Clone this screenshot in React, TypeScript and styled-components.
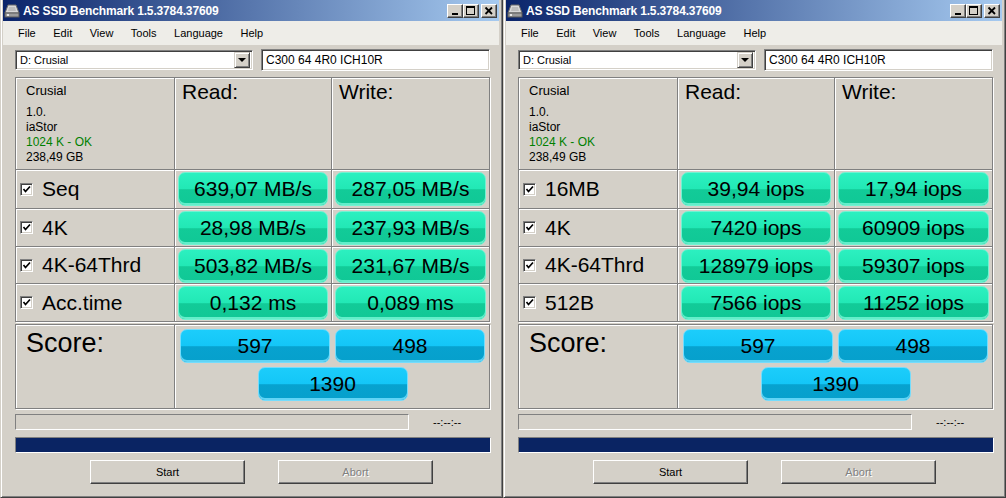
import React from "react";
import styled, { createGlobalStyle } from "styled-components";

type Row = { label: string; read: string; write: string };

interface IBench {
  rows: Row[];
}

const GlobalStyle = createGlobalStyle`
  html, body {
    margin: 0;
    padding: 0;
    background: #d4d0c8;
  }
  body {
    font-family: "Liberation Sans", Arial, sans-serif;
  }
  * {
    box-sizing: border-box;
  }
`;

const Desktop = styled.div`
  display: flex;
  width: 1006px;
  height: 498px;
  overflow: hidden;
`;

const Frame = styled.div`
  width: 503px;
  height: 498px;
  display: flex;
  flex-direction: column;
  background: #d4d0c8;
  border-style: solid;
  border-width: 0 1px 1px 1px;
  border-color: #d4d0c8 #404040 #404040 #d4d0c8;
  box-shadow: inset 1px 0 0 #fff, inset -1px -1px 0 #808080;
  padding: 0 3px 2px 2px;
`;

const TitleBar = styled.div`
  height: 21px;
  display: flex;
  align-items: center;
  padding: 0 2px 0 1px;
  background: linear-gradient(to right, #0a246a, #a6caf0);
`;

const TitleText = styled.span`
  margin-left: 3px;
  flex: 1;
  color: #fff;
  font-weight: bold;
  font-size: 12px;
  letter-spacing: -0.15px;
  white-space: nowrap;
`;

const CaptionButton = styled.div<{ $gap?: number }>`
  width: 16px;
  height: 14px;
  margin-left: ${(p) => p.$gap || 0}px;
  display: flex;
  align-items: center;
  justify-content: center;
  background: #d4d0c8;
  border: 1px solid;
  border-color: #fff #404040 #404040 #fff;
  box-shadow: inset -1px -1px 0 #808080;
`;

const MenuBar = styled.div`
  height: 24px;
  display: flex;
  align-items: center;
  gap: 17.5px;
  padding-left: 15px;
  background: #eeede8;
  font-size: 11px;
  color: #000;
`;

const Body = styled.div`
  display: flex;
  flex-direction: column;
  padding: 4px 9px 0 12px;
`;

const DriveRow = styled.div`
  display: flex;
  gap: 8px;
  height: 22px;
  align-items: flex-start;
`;

const sunken = `
  background: #fff;
  border: 1px solid;
  border-color: #808080 #fff #fff #808080;
  box-shadow: inset 1px 1px 0 #404040, inset -1px -1px 0 #d4d0c8;
`;

const Select = styled.div`
  ${sunken}
  width: 238px;
  height: 20px;
  margin-top: 1px;
  display: flex;
  align-items: center;
  padding: 2px 2px 2px 4px;
  font-size: 11px;
`;

const SelectText = styled.span`
  flex: 1;
`;

const ArrowButton = styled.div`
  width: 16px;
  height: 16px;
  display: flex;
  align-items: center;
  justify-content: center;
  background: #d4d0c8;
  border: 1px solid;
  border-color: #d4d0c8 #404040 #404040 #d4d0c8;
  box-shadow: inset 1px 1px 0 #fff, inset -1px -1px 0 #808080;

  &::after {
    content: "";
    border-left: 4px solid transparent;
    border-right: 4px solid transparent;
    border-top: 4px solid #000;
  }
`;

const TextBox = styled.div`
  ${sunken}
  flex: 1;
  height: 22px;
  display: flex;
  align-items: center;
  padding-left: 4px;
  font-size: 12px;
`;

const Table = styled.div<{ $rows: string }>`
  display: grid;
  grid-template-columns: 159px 157px 158px;
  grid-template-rows: ${(p) => p.$rows};
  border-top: 1px solid #808080;
  border-left: 1px solid #808080;
  box-shadow: 1px 1px 0 #fff;
  width: 475px;
`;

const Results = styled(Table)`
  margin-top: 6px;
`;

const ScoreTable = styled(Table)`
  margin-top: 2px;
  grid-template-columns: 159px 315px;
`;

const Cell = styled.div`
  border-right: 1px solid #808080;
  border-bottom: 1px solid #808080;
  box-shadow: inset 1px 1px 0 #fff;
`;

const InfoCell = styled(Cell)`
  padding: 5px 0 0 10px;
  font-size: 12px;
  line-height: 15px;
  color: #000;
`;

const DriveName = styled.div`
  font-size: 13px;
  margin-bottom: 7px;
`;

const Ok = styled.div`
  color: #008000;
`;

const HeadCell = styled(Cell)`
  padding: 2px 0 0 7px;
  font-size: 21px;
`;

const LabelCell = styled(Cell)`
  display: flex;
  align-items: center;
  padding: 0 0 0 4px;
  gap: 9px;
  font-size: 21px;
`;

const Check = styled.div`
  ${sunken}
  width: 13px;
  height: 13px;
  display: flex;
  align-items: center;
  justify-content: center;
`;

const ValueCell = styled(Cell)`
  padding: 2px 3px 0 3px;
`;

const Pill = styled.div<{ $tone: "green" | "blue" }>`
  height: 34px;
  width: 100%;
  border-radius: 7px;
  display: flex;
  align-items: center;
  justify-content: center;
  font-size: 21px;
  color: #000;
  border: 1px solid ${(p) => (p.$tone === "green" ? "#72f2d2" : "#74dcfc")};
  background: ${(p) =>
    p.$tone === "green"
      ? "linear-gradient(#2cf0c0, #22e8b5 50%, #12cb98 52%, #10c896)"
      : "linear-gradient(#1ccdfb, #14c6f7 50%, #07a2cf 52%, #06a0cc)"};
  box-shadow: inset 0 -2px 0
    ${(p) => (p.$tone === "green" ? "rgba(120,248,215,0.8)" : "rgba(120,225,255,0.8)")};
`;

const ScoreLabel = styled(Cell)`
  padding: 3px 0 0 10px;
  font-size: 27px;
`;

const ScoreCell = styled(Cell)`
  display: grid;
  grid-template-columns: 150px 150px;
  grid-template-rows: 34px 34px;
  column-gap: 5px;
  row-gap: 4px;
  padding: 4px 0 0 5px;
`;

const TotalPill = styled(Pill)`
  grid-column: 1 / span 2;
  justify-self: center;
  width: 150px;
`;

const StatusRow = styled.div`
  display: flex;
  align-items: center;
  margin-top: 5px;
  height: 16px;
`;

const StatusBox = styled.div`
  width: 394px;
  height: 16px;
  border: 1px solid;
  border-color: #808080 #fff #fff #808080;
`;

const Time = styled.span`
  margin-left: 24px;
  font-size: 11px;
  color: #000;
`;

const Progress = styled.div`
  margin-top: 7px;
  height: 16px;
  width: 476px;
  border: 1px solid;
  border-color: #808080 #fff #fff #808080;
  background: #0a2463;
`;

const ButtonRow = styled.div`
  display: flex;
  gap: 33px;
  margin-top: 7px;
  padding-left: 75px;
`;

const Button = styled.div<{ $disabled?: boolean }>`
  width: 155px;
  height: 24px;
  display: flex;
  align-items: center;
  justify-content: center;
  font-size: 11px;
  background: #d4d0c8;
  border: 1px solid;
  border-color: #fff #404040 #404040 #fff;
  box-shadow: inset -1px -1px 0 #808080;
  color: ${(p) => (p.$disabled ? "#808080" : "#000")};
  text-shadow: ${(p) => (p.$disabled ? "1px 1px 0 #fff" : "none")};
`;

function DriveIcon() {
  return (
    <svg width="16" height="16" viewBox="0 0 16 16">
      <polygon points="4,2 12,2 15,10 1,10" fill="#d8d8d8" stroke="#6a6a6a" strokeWidth="1" />
      <rect x="1" y="10" width="14" height="4" fill="#9c9c9c" stroke="#5a5a5a" strokeWidth="1" />
      <polygon points="5,4 11,4 12,8 4,8" fill="#bcbcbc" />
      <rect x="3" y="11" width="2" height="2" fill="#e8e8e8" />
    </svg>
  );
}

function CaptionButtons() {
  return (
    <>
      <CaptionButton>
        <svg width="10" height="10" viewBox="0 0 10 10">
          <rect x="2" y="7" width="6" height="2" fill="#000" />
        </svg>
      </CaptionButton>
      <CaptionButton>
        <svg width="10" height="10" viewBox="0 0 10 10">
          <rect x="0.5" y="0.5" width="8" height="8" fill="none" stroke="#000" />
          <rect x="0" y="1" width="9" height="1" fill="#000" />
        </svg>
      </CaptionButton>
      <CaptionButton $gap={2}>
        <svg width="10" height="10" viewBox="0 0 10 10">
          <path d="M1.5 1.5 L8 8 M8 1.5 L1.5 8" stroke="#000" strokeWidth="1.8" />
        </svg>
      </CaptionButton>
    </>
  );
}

function Checked() {
  return (
    <Check>
      <svg width="9" height="9" viewBox="0 0 9 9">
        <polyline points="1.5,4 3.5,6.5 8,1.5" fill="none" stroke="#000" strokeWidth="1.7" />
      </svg>
    </Check>
  );
}

function Bench(props: IBench) {
  return (
    <Frame>
      <TitleBar>
        <DriveIcon />
        <TitleText>AS SSD Benchmark 1.5.3784.37609</TitleText>
        <CaptionButtons />
      </TitleBar>
      <MenuBar>
        {["File", "Edit", "View", "Tools", "Language", "Help"].map((m) => (
          <span key={m}>{m}</span>
        ))}
      </MenuBar>
      <Body>
        <DriveRow>
          <Select>
            <SelectText>D: Crusial</SelectText>
            <ArrowButton />
          </Select>
          <TextBox>C300 64 4R0 ICH10R</TextBox>
        </DriveRow>

        <Results $rows="92px 39px 38px 37px 38px">
          <InfoCell>
            <DriveName>Crusial</DriveName>
            <div>1.0.</div>
            <div>iaStor</div>
            <Ok>1024 K - OK</Ok>
            <div>238,49 GB</div>
          </InfoCell>
          <HeadCell>Read:</HeadCell>
          <HeadCell>Write:</HeadCell>
          {props.rows.map((r) => (
            <React.Fragment key={r.label}>
              <LabelCell>
                <Checked />
                {r.label}
              </LabelCell>
              <ValueCell>
                <Pill $tone="green">{r.read}</Pill>
              </ValueCell>
              <ValueCell>
                <Pill $tone="green">{r.write}</Pill>
              </ValueCell>
            </React.Fragment>
          ))}
        </Results>

        <ScoreTable $rows="84px">
          <ScoreLabel>Score:</ScoreLabel>
          <ScoreCell>
            <Pill $tone="blue">597</Pill>
            <Pill $tone="blue">498</Pill>
            <TotalPill $tone="blue">1390</TotalPill>
          </ScoreCell>
        </ScoreTable>

        <StatusRow>
          <StatusBox />
          <Time>--:--:--</Time>
        </StatusRow>
        <Progress />
        <ButtonRow>
          <Button>Start</Button>
          <Button $disabled>Abort</Button>
        </ButtonRow>
      </Body>
    </Frame>
  );
}

const mbRows: Row[] = [
  { label: "Seq", read: "639,07 MB/s", write: "287,05 MB/s" },
  { label: "4K", read: "28,98 MB/s", write: "237,93 MB/s" },
  { label: "4K-64Thrd", read: "503,82 MB/s", write: "231,67 MB/s" },
  { label: "Acc.time", read: "0,132 ms", write: "0,089 ms" },
];

const iopsRows: Row[] = [
  { label: "16MB", read: "39,94 iops", write: "17,94 iops" },
  { label: "4K", read: "7420 iops", write: "60909 iops" },
  { label: "4K-64Thrd", read: "128979 iops", write: "59307 iops" },
  { label: "512B", read: "7566 iops", write: "11252 iops" },
];

export default function App() {
  return (
    <>
      <GlobalStyle />
      <Desktop>
        <Bench rows={mbRows} />
        <Bench rows={iopsRows} />
      </Desktop>
    </>
  );
}
